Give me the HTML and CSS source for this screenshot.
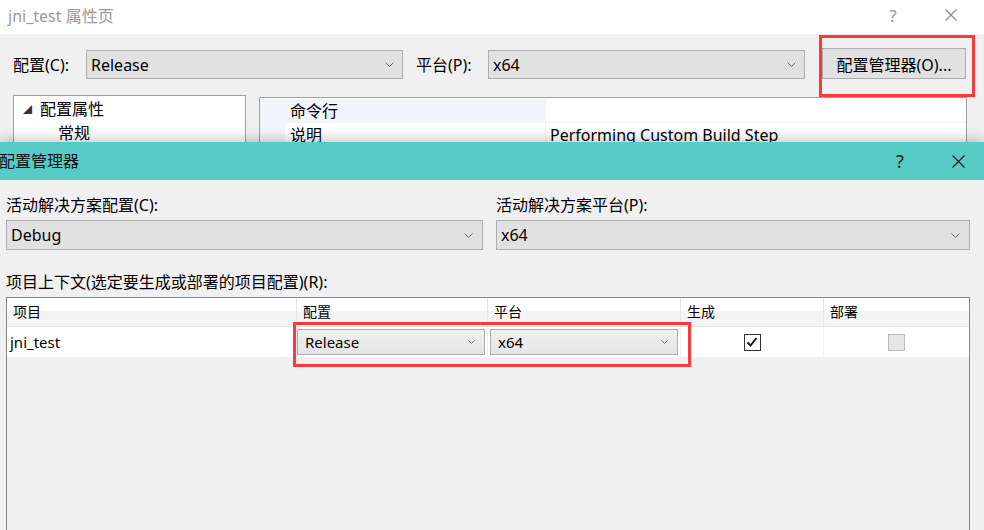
FILE: index.html
```html
<!DOCTYPE html>
<html lang="zh-CN">
<head>
<meta charset="utf-8">
<title>配置管理器</title>
<link rel="stylesheet" href="styles.css">
</head>
<body>
<div class="bg-dialog">
  <div class="titlebar titlebar-inactive">
    <span class="title">jni_test 属性页</span>
    <div class="caption">
      <span class="cap-btn help">?</span>
      <span class="cap-btn close">
        <svg width="12" height="12" viewBox="0 0 12 12"><path d="M0.5 0.5 L11.5 11.5 M11.5 0.5 L0.5 11.5" stroke="#8a8a8a" stroke-width="1.1" fill="none"/></svg>
      </span>
    </div>
  </div>
  <div class="bg-body">
    <div class="config-row">
      <span class="lbl lbl-config">配置(C):</span>
      <div class="combo combo-top">
        <span>Release</span>
        <svg class="chev" width="9" height="5" viewBox="0 0 9 5"><path d="M0.5 0.5 L4.5 4.5 L8.5 0.5" stroke="#666" stroke-width="1" fill="none"/></svg>
      </div>
      <span class="lbl lbl-platform">平台(P):</span>
      <div class="combo combo-top">
        <span>x64</span>
        <svg class="chev" width="9" height="5" viewBox="0 0 9 5"><path d="M0.5 0.5 L4.5 4.5 L8.5 0.5" stroke="#666" stroke-width="1" fill="none"/></svg>
      </div>
      <button class="btn-manager">配置管理器(O)...</button>
    </div>
    <div class="panels">
      <div class="tree">
        <div class="tree-row"><span class="tri">◢</span>配置属性</div>
        <div class="tree-row tree-child">常规</div>
      </div>
      <div class="props">
        <div class="prop-row">
          <span class="gutter"></span>
          <span class="prop-name sel">命令行</span>
          <span class="prop-val"></span>
        </div>
        <div class="prop-row">
          <span class="gutter"></span>
          <span class="prop-name">说明</span>
          <span class="prop-val">Performing Custom Build Step</span>
        </div>
      </div>
    </div>
  </div>
</div>

<div class="fg-dialog">
  <div class="titlebar titlebar-active">
    <span class="title title-fg">配置管理器</span>
    <div class="caption caption-fg">
      <span class="cap-btn help help-fg">?</span>
      <span class="cap-btn close close-fg">
        <svg width="13" height="13" viewBox="0 0 13 13"><path d="M0.5 0.5 L12.5 12.5 M12.5 0.5 L0.5 12.5" stroke="#1e1e1e" stroke-width="1.2" fill="none"/></svg>
      </span>
    </div>
  </div>
  <div class="fg-body">
    <div class="solution-row">
      <div class="sol-col sol-left">
        <div class="lbl-fg">活动解决方案配置(C):</div>
        <div class="combo combo-sol">
          <span>Debug</span>
          <svg class="chev" width="9" height="5" viewBox="0 0 9 5"><path d="M0.5 0.5 L4.5 4.5 L8.5 0.5" stroke="#666" stroke-width="1" fill="none"/></svg>
        </div>
      </div>
      <div class="sol-col sol-right">
        <div class="lbl-fg">活动解决方案平台(P):</div>
        <div class="combo combo-sol">
          <span>x64</span>
          <svg class="chev" width="9" height="5" viewBox="0 0 9 5"><path d="M0.5 0.5 L4.5 4.5 L8.5 0.5" stroke="#666" stroke-width="1" fill="none"/></svg>
        </div>
      </div>
    </div>
    <div class="lbl-fg lbl-context">项目上下文(选定要生成或部署的项目配置)(R):</div>
    <div class="grid-table">
      <div class="grid-head">
        <div class="hcell">项目</div>
        <div class="hcell">配置</div>
        <div class="hcell">平台</div>
        <div class="hcell">生成</div>
        <div class="hcell">部署</div>
      </div>
      <div class="grid-row">
        <div class="cell cell-name">jni_test</div>
        <div class="cell cell-combo">
          <div class="combo combo-cell">
            <span>Release</span>
            <svg class="chev" width="7" height="4" viewBox="0 0 7 4"><path d="M0.5 0.5 L3.5 3.5 L6.5 0.5" stroke="#777" stroke-width="1" fill="none"/></svg>
          </div>
        </div>
        <div class="cell cell-combo cell-combo2">
          <div class="combo combo-cell">
            <span>x64</span>
            <svg class="chev" width="7" height="4" viewBox="0 0 7 4"><path d="M0.5 0.5 L3.5 3.5 L6.5 0.5" stroke="#777" stroke-width="1" fill="none"/></svg>
          </div>
        </div>
        <div class="cell cell-check">
          <span class="checkbox checked">
            <svg width="14" height="14" viewBox="0 0 14 14"><path d="M2.5 7.5 L5.5 10.5 L11.5 3" stroke="#1a1a1a" stroke-width="2" fill="none"/></svg>
          </span>
        </div>
        <div class="cell cell-check">
          <span class="checkbox disabled"></span>
        </div>
      </div>
      <div class="grid-empty"></div>
    </div>
  </div>
</div>

<div class="highlight hl-manager"></div>
<div class="highlight hl-row"></div>
</body>
</html>
```

FILE: styles.css
```css
* { box-sizing: border-box; }

html, body {
  margin: 0;
  padding: 0;
}

body {
  width: 984px;
  height: 530px;
  overflow: hidden;
  position: relative;
  background: #f0f0f0;
  font-family: "Noto Sans", "Noto Sans CJK SC", sans-serif;
  color: #000;
}

/* ---------- background dialog ---------- */
.bg-dialog {
  height: 142px;
  overflow: hidden;
  background: #f0f0f0;
}

.titlebar {
  display: flex;
  align-items: center;
}

.titlebar-inactive {
  height: 34px;
  background: #fff;
}

.title {
  padding-left: 8px;
  font-size: 16px;
  line-height: 22px;
  color: #9a9a9a;
  padding-bottom: 3px;
}

.caption {
  margin-left: auto;
  display: flex;
  align-items: center;
  padding-right: 4px;
  height: 100%;
}

.cap-btn {
  width: 58px;
  height: 100%;
  display: flex;
  align-items: center;
  justify-content: center;
}

.help {
  font-size: 17px;
  color: #9a9a9a;
  padding-bottom: 4px;
}

.close {
  padding-bottom: 5px;
}

.bg-body {
  padding-top: 14px;
}

.config-row {
  display: flex;
  align-items: flex-end;
  height: 31px;
}

.lbl {
  font-size: 16px;
  line-height: 22px;
  align-self: center;
  padding-top: 2px;
}

.lbl-config {
  width: 86px;
  padding-left: 13px;
}

.lbl-platform {
  width: 72px;
  margin-left: 13px;
}

.combo {
  display: flex;
  align-items: center;
  justify-content: space-between;
  border: 1px solid #adadad;
  background: #e1e1e1;
}

.combo-top {
  width: 317px;
  height: 29px;
  padding: 0 8px 0 4px;
  font-size: 16px;
}

.chev { flex: none; }

.btn-manager {
  margin-left: 17px;
  width: 144px;
  height: 31px;
  border: 1px solid #adadad;
  background: #e1e1e1;
  font-family: inherit;
  font-size: 16px;
  color: #000;
  padding: 0;
}

.panels {
  display: flex;
  align-items: flex-start;
  margin-top: 16px;
}

.tree {
  margin-left: 13px;
  width: 233px;
  height: 80px;
  background: #fff;
  border: 1px solid #a0a0a0;
  padding-top: 1px;
}

.tree-row {
  height: 24px;
  line-height: 24px;
  font-size: 16px;
  padding-left: 9px;
  display: flex;
  align-items: center;
}

.tri {
  font-size: 9px;
  width: 17px;
  color: #333;
  padding-top: 1px;
}

.tree-child {
  padding-left: 44px;
}

.props {
  margin-left: 13px;
  margin-top: 2px;
  width: 708px;
  height: 80px;
  background: #fff;
  border: 1px solid #a0a0a0;
  padding-top: 1px;
}

.prop-row {
  display: flex;
  height: 24px;
  font-size: 16px;
  line-height: 24px;
}

.gutter {
  width: 25px;
  background: #f2f5fa;
}

.prop-name {
  width: 260px;
  padding-left: 5px;
  background: #fff;
}

.prop-name.sel {
  background: #f2f5fa;
}

.prop-val {
  flex: 1;
  padding-left: 4px;
  border-left: 1px solid #f0f0f0;
  border-bottom: 1px solid #f3f3f3;
}

/* ---------- foreground dialog ---------- */
.fg-dialog {
  position: relative;
  z-index: 1;
  height: 388px;
  background: #f0f0f0;
  box-shadow: 0 -3px 12px rgba(0, 0, 0, 0.22);
}

.titlebar-active {
  height: 38px;
  background: #57cbc5;
}

.title-fg {
  padding-left: 0;
  margin-left: -1px;
  color: #111;
  padding-bottom: 0;
}

.caption-fg {
  padding-right: 0;
}

.help-fg {
  width: 64px;
  font-size: 18px;
  color: #222;
  padding-bottom: 1px;
}

.close-fg {
  width: 52px;
  padding-bottom: 0;
}

.fg-body {
  padding: 14px 14px 0 6px;
}

.solution-row {
  display: flex;
  gap: 13px;
}

.sol-left { width: 477px; }
.sol-right { width: 474px; }

.lbl-fg {
  font-size: 16px;
  line-height: 22px;
}

.combo-sol {
  margin-top: 4px;
  height: 30px;
  padding: 0 9px 0 4px;
  font-size: 16px;
}

.lbl-context {
  margin-top: 21px;
}

.grid-table {
  margin-top: 4px;
  width: 964px;
  height: 240px;
  border: 1px solid #828790;
  border-bottom: none;
  background: #f0f0f0;
}

.grid-head,
.grid-row {
  display: grid;
  grid-template-columns: 290px 191px 193px 143px 145px;
}

.grid-head {
  height: 29px;
  background: linear-gradient(to bottom, #ffffff 0, #ffffff 45%, #f4f4f5 45%, #f4f4f5 100%);
  border-bottom: 1px solid #e3e3e3;
}

.hcell {
  font-size: 14px;
  line-height: 28px;
  padding-left: 6px;
  border-right: 1px solid #e5e5e5;
}

.hcell:last-child { border-right: none; }

.grid-row {
  height: 30px;
  background: #fff;
}

.cell {
  display: flex;
  align-items: center;
  border-right: 1px solid #f0f0f0;
}

.cell:last-child { border-right: none; }

.cell-name {
  font-size: 15px;
  padding-left: 3px;
  padding-bottom: 1px;
}

.cell-combo {
  padding: 0 2px 0 0;
}

.cell-combo2 {
  padding: 0 2px 0 2px;
}

.combo-cell {
  width: 100%;
  height: 26px;
  padding: 0 9px 0 7px;
  font-size: 15px;
  border: 1px solid #acacac;
  background: linear-gradient(to bottom, #f0f0f0, #e5e5e5);
}

.cell-check {
  justify-content: center;
}

.checkbox {
  width: 17px;
  height: 17px;
  display: flex;
  align-items: center;
  justify-content: center;
}

.checkbox.checked {
  border: 1px solid #333;
  background: #fff;
}

.checkbox.disabled {
  border: 1px solid #bcbcbc;
  background: #e6e6e6;
}

/* ---------- red highlight annotations ---------- */
.highlight {
  position: absolute;
  z-index: 2;
  border: 3px solid #f73b3b;
}

.hl-manager {
  left: 819px;
  top: 35px;
  width: 156px;
  height: 62px;
}

.hl-row {
  left: 293px;
  top: 322px;
  width: 398px;
  height: 45px;
}
```
